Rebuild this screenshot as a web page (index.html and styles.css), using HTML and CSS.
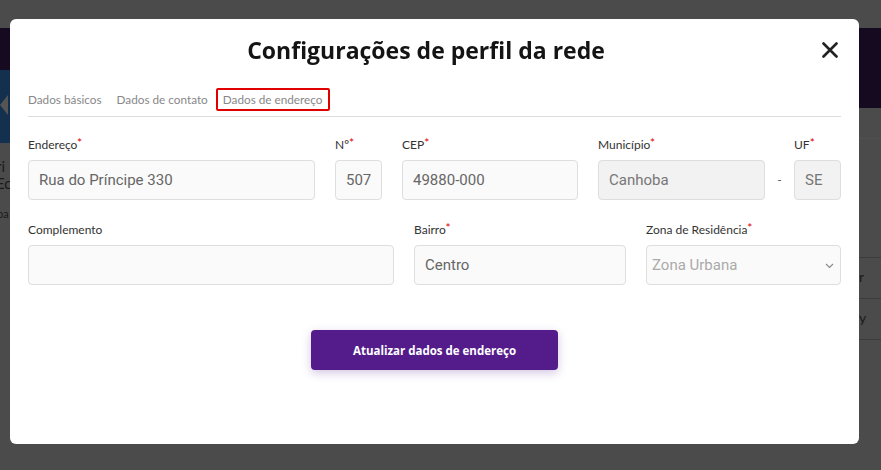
FILE: index.html
```html
<!DOCTYPE html>
<html lang="pt-BR">
<head>
  <meta charset="UTF-8" />
  <meta name="viewport" content="width=device-width, initial-scale=1" />
  <title>Configurações de perfil da rede</title>
  <link rel="stylesheet" href="styles.css">
</head>
<body>
  <div class="page">
    <header class="topbar">
      <div class="brand"><span class="brand-arrow"></span></div>
    </header>
    <div class="page-main">
      <aside class="side">
        <p class="side-name">ri</p>
        <p class="side-name">Ec</p>
        <p class="side-sub">pa</p>
      </aside>
      <section class="content"></section>
      <div class="table-area">
        <div class="row-line"></div>
        <div class="row-line">r</div>
        <div class="row-line">y</div>
        <div class="row-line"></div>
      </div>
    </div>
  </div>

  <div class="overlay">
    <div class="modal">
      <div class="modal-header">
        <h2>Configurações de perfil da rede</h2>
        <button class="close-btn" aria-label="Fechar">
          <svg width="16" height="16" viewBox="0 0 16 16">
            <path d="M1.5 1.5 L14.5 14.5 M14.5 1.5 L1.5 14.5" stroke="#222" stroke-width="2.6" stroke-linecap="round"/>
          </svg>
        </button>
      </div>

      <nav class="tabs">
        <span class="tab">Dados básicos</span>
        <span class="tab">Dados de contato</span>
        <span class="tab active">Dados de endereço</span>
      </nav>

      <form class="address-form">
        <div class="row row-1">
          <div class="field f-endereco">
            <label>Endereço<span class="req">*</span></label>
            <input type="text" value="Rua do Príncipe 330">
          </div>
          <div class="field f-num">
            <label>Nº<span class="req">*</span></label>
            <input type="text" value="507">
          </div>
          <div class="field f-cep">
            <label>CEP<span class="req">*</span></label>
            <input type="text" value="49880-000">
          </div>
          <div class="field f-municipio">
            <label>Município<span class="req">*</span></label>
            <input type="text" value="Canhoba" disabled>
          </div>
          <div class="dash">-</div>
          <div class="field f-uf">
            <label>UF<span class="req">*</span></label>
            <input type="text" value="SE" disabled>
          </div>
        </div>

        <div class="row row-2">
          <div class="field f-complemento">
            <label>Complemento</label>
            <input type="text" value="">
          </div>
          <div class="field f-bairro">
            <label>Bairro<span class="req">*</span></label>
            <input type="text" value="Centro">
          </div>
          <div class="field f-zona">
            <label>Zona de Residência<span class="req">*</span></label>
            <div class="select-wrap">
              <select>
                <option>Zona Urbana</option>
                <option>Zona Rural</option>
              </select>
              <svg class="chevron" width="9" height="6" viewBox="0 0 9 6">
                <path d="M1 1 L4.5 4.5 L8 1" fill="none" stroke="#888" stroke-width="1.1"/>
              </svg>
            </div>
          </div>
        </div>

        <div class="actions">
          <button type="submit" class="submit-btn">Atualizar dados de endereço</button>
        </div>
      </form>
    </div>
  </div>
</body>
</html>
```

FILE: styles.css
```css
* {
  box-sizing: border-box;
}

body {
  margin: 0;
  height: 470px;
  overflow: hidden;
  background-color: #4b4b4b;
  font-family: Lato, "Open Sans", sans-serif;
}

/* pagina por tras do modal */
.page {
  padding-top: 28px;
}

.topbar {
  height: 80px;
  background-color: #150a20;
}

.brand {
  width: 12px;
  height: 115px;
  background: linear-gradient(#150a20 0, #150a20 42px, #14304f 42px);
  position: relative;
}

.brand-arrow {
  position: absolute;
  left: 0;
  top: 67px;
  width: 0;
  height: 0;
  border-top: 10px solid transparent;
  border-bottom: 10px solid transparent;
  border-right: 8px solid #555;
}

.page-main {
  display: flex;
  justify-content: space-between;
}

.side {
  width: 10px;
  overflow: hidden;
  margin-top: 50px;
  color: #1a1a1a;
}

.side-name {
  margin: 0 0 0 -4px;
  font-size: 15px;
  line-height: 17px;
}

.side-sub {
  margin: 15px 0 0 -3px;
  font-size: 11px;
}

.table-area {
  width: 22px;
  padding-top: 30px;
  color: #1a1a1a;
  font-size: 14px;
}

.row-line {
  height: 41px;
  border-top: 1px solid #3c3c3c;
  line-height: 38px;
}

.row-line:first-child {
  height: 119px;
  border-top-color: #505050;
}

/* modal */
.overlay {
  position: fixed;
  inset: 0;
  padding: 19px 0 0 10px;
}

.modal {
  width: 849px;
  height: 425px;
  background: #fff;
  border-radius: 6px;
  padding: 0 18px;
}

.modal-header {
  position: relative;
  padding-top: 16px;
  padding-right: 17px;
  height: 70px;
}

.modal-header h2 {
  margin: 0;
  text-align: center;
  font-family: "Open Sans", sans-serif;
  font-weight: 700;
  font-size: 23px;
  line-height: 30px;
  color: #141414;
}

.close-btn {
  position: absolute;
  right: 3px;
  top: 23px;
  background: none;
  border: none;
  padding: 0;
  width: 16px;
  height: 16px;
  cursor: pointer;
}

.tabs {
  display: flex;
  align-items: center;
  height: 28px;
  padding-bottom: 6px;
  border-bottom: 1px solid #dcdcdc;
}

.tab {
  font-size: 11.75px;
  color: #888;
  padding: 4px 0;
  margin-right: 15px;
  white-space: nowrap;
}

.tab.active {
  margin-left: -7px;
  padding: 2px 6px 2px 5px;
  border: 2px solid #e00000;
  border-radius: 2px;
}

/* formulario */
.address-form {
  padding-top: 20px;
}

.row {
  display: flex;
  gap: 20px;
  margin-bottom: 22px;
}

.f-endereco { width: 287px; }
.f-num { width: 47px; }
.f-cep { width: 176px; }
.f-municipio { width: 167px; }
.f-uf { width: 47px; }
.f-complemento { width: 366px; }
.f-bairro { width: 212px; }
.f-zona { width: 195px; }

.field label {
  display: block;
  font-size: 12px;
  line-height: 16px;
  color: #333;
  margin-bottom: 7px;
  white-space: nowrap;
}

.req {
  color: #e00000;
  position: relative;
  top: -2px;
}

.field input,
.field select {
  width: 100%;
  height: 40px;
  padding: 0 10px;
  border: 1px solid #dedede;
  border-radius: 4px;
  background-color: #fafafa;
  font-family: Roboto, sans-serif;
  font-size: 15px;
  color: #666;
  outline: none;
}

.field input:disabled {
  background-color: #f2f2f2;
  color: #777;
}

.dash {
  width: 29px;
  margin: 0 -20px;
  padding-top: 35px;
  text-align: center;
  font-size: 12px;
  color: #555;
}

.select-wrap {
  position: relative;
}

.field select {
  appearance: none;
  padding-left: 5px;
  color: #aaa;
}

.chevron {
  position: absolute;
  right: 7px;
  top: 18px;
}

.actions {
  display: flex;
  justify-content: center;
  padding-top: 23px;
}

.submit-btn {
  width: 247px;
  height: 40px;
  background-color: #541b8b;
  color: #fff;
  border: none;
  border-radius: 4px;
  font-family: "Open Sans", sans-serif;
  font-weight: 700;
  font-size: 11.5px;
  box-shadow: 0 3px 10px rgba(84, 27, 139, 0.25);
  cursor: pointer;
}
```
